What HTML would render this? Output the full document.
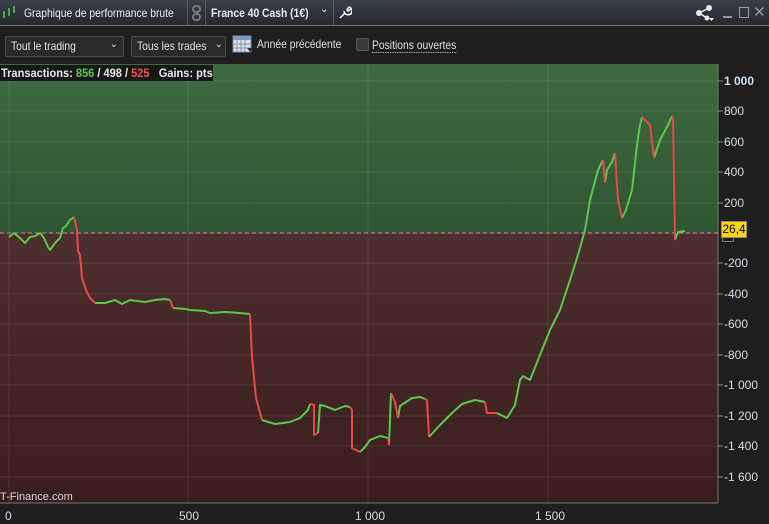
<!DOCTYPE html>
<html><head><meta charset="utf-8"><style>
body{margin:0;width:769px;height:524px;background:#1e1e1e;overflow:hidden;font-family:"Liberation Sans",sans-serif;position:relative}
.title{position:absolute;left:0;top:0;width:769px;height:25px;background:linear-gradient(#3a4048,#262a30);border-bottom:1px solid #6a6e74;color:#e6eaf0;font-size:12px}
.title span{position:absolute;top:6px}
.n{display:inline-block;transform:scaleX(.86);transform-origin:left;white-space:nowrap}
.sep{position:absolute;top:0;width:1px;height:25px;background:#555a60}
.tb{position:absolute;top:36px;height:19px;border:1px solid #4a4a4a;background:#2a2a2a;border-radius:2px;color:#e0e0e0;font-size:12px;line-height:19px;padding-left:5px;box-sizing:content-box}
.ax{position:absolute;color:#d0dcea;font-size:12px}
</style></head><body>
<div class="title">
<svg style="position:absolute;left:2px;top:5px" width="14" height="14"><g stroke="#5c5" stroke-width="1.5"><line x1="2" y1="6" x2="2" y2="13"/><line x1="7" y1="3" x2="7" y2="11"/><line x1="12" y1="1" x2="12" y2="8"/></g></svg>
<span style="left:24px" class="n">Graphique de performance brute</span>
<div class="sep" style="left:187px"></div>
<svg style="position:absolute;left:191px;top:5px" width="12" height="16"><rect x="2" y="1" width="7" height="6" rx="3" fill="none" stroke="#777" stroke-width="2"/><rect x="2" y="9" width="7" height="6" rx="3" fill="none" stroke="#777" stroke-width="2"/></svg>
<div class="sep" style="left:205px"></div>
<span style="left:211px;font-weight:bold" class="n">France 40 Cash (1€)</span>
<span style="left:320px;font-size:10px;top:4px">⌄</span>
<div class="sep" style="left:333px"></div>
<svg style="position:absolute;left:338px;top:5px" width="14" height="14"><path d="M2 13 L7 8 M6 6 A4 4 0 1 0 11 2 L9 5 L10 6 L13 4" stroke="#fff" stroke-width="1.5" fill="none"/></svg>
<svg style="position:absolute;left:695px;top:4px" width="20" height="17"><g fill="#eee" stroke="#eee"><line x1="4" y1="9" x2="14" y2="4" stroke-width="1.5"/><line x1="4" y1="9" x2="12" y2="14" stroke-width="1.5"/><circle cx="4" cy="9" r="2.5"/><circle cx="14" cy="4" r="2.5"/><circle cx="12" cy="14" r="2"/></g><path d="M14 14 h5 l-2.5 3z" fill="#eee"/></svg>
<div style="position:absolute;left:723px;top:16px;width:9px;height:2px;background:#999"></div>
<div style="position:absolute;left:739px;top:7px;width:8px;height:9px;border:1.5px solid #999"></div>
<span style="left:753px;top:3px;color:#999;font-size:15px">✕</span>
</div>
<div class="tb" style="left:5px;width:112px"><span class="n">Tout le trading</span><span style="position:absolute;right:5px;top:-2px;font-size:10px">⌄</span></div>
<div class="tb" style="left:131px;width:88px"><span class="n">Tous les trades</span><span style="position:absolute;right:2px;top:-2px;font-size:10px">⌄</span></div>
<svg style="position:absolute;left:232px;top:33px" width="21" height="20"><rect x="1" y="3" width="18" height="16" fill="#dde4ee" stroke="#7a8aa0"/><rect x="1" y="3" width="18" height="4" fill="#7a9ac0"/><g stroke="#8898b0" stroke-width="1"><line x1="5" y1="7" x2="5" y2="19"/><line x1="9" y1="7" x2="9" y2="19"/><line x1="13" y1="7" x2="13" y2="19"/><line x1="1" y1="11" x2="19" y2="11"/><line x1="1" y1="15" x2="19" y2="15"/></g><path d="M15 15h6l-3 4z" fill="#333"/></svg>
<div style="position:absolute;left:257px;top:37px;color:#e0e0e0;font-size:12px" class="n">Année précédente</div>
<div style="position:absolute;left:356px;top:38px;width:11px;height:11px;background:#3a3a3a;border:1px solid #555;border-radius:2px"></div>
<div style="position:absolute;left:372px;top:39px;color:#e0e0e0;font-size:12px;line-height:12px" class="n"><span style="border-bottom:1px dotted #ccc">Positions ouvertes</span></div>
<svg style="position:absolute;left:0;top:0" width="769" height="524">
<defs><linearGradient id="g" x1="0" y1="0" x2="0" y2="1"><stop offset="0" stop-color="#3f6b41"/><stop offset="1" stop-color="#2f5533"/></linearGradient>
<linearGradient id="r" x1="0" y1="0" x2="0" y2="1"><stop offset="0" stop-color="#4d2f2f"/><stop offset="1" stop-color="#3a1d1d"/></linearGradient></defs>
<rect x="0" y="64" width="718" height="169" fill="url(#g)"/>
<rect x="0" y="233" width="718" height="270" fill="url(#r)"/>
<line x1="718" y1="64" x2="718" y2="503" stroke="#777"/>
<line x1="0" y1="503" x2="718" y2="503" stroke="#777"/>
<g stroke="#ffffff" stroke-opacity="0.09">
<line x1="0" y1="81" x2="718" y2="81"/><line x1="0" y1="111" x2="718" y2="111"/><line x1="0" y1="142" x2="718" y2="142"/><line x1="0" y1="172" x2="718" y2="172"/><line x1="0" y1="203" x2="718" y2="203"/><line x1="0" y1="263" x2="718" y2="263"/><line x1="0" y1="294" x2="718" y2="294"/><line x1="0" y1="324" x2="718" y2="324"/><line x1="0" y1="355" x2="718" y2="355"/><line x1="0" y1="385" x2="718" y2="385"/><line x1="0" y1="416" x2="718" y2="416"/><line x1="0" y1="446" x2="718" y2="446"/><line x1="0" y1="477" x2="718" y2="477"/>
<line x1="9" y1="64" x2="9" y2="503"/><line x1="188" y1="64" x2="188" y2="503"/><line x1="368" y1="64" x2="368" y2="503"/><line x1="548" y1="64" x2="548" y2="503"/>
</g>
<g stroke="#888"><line x1="718" y1="81" x2="723" y2="81"/><line x1="718" y1="111" x2="723" y2="111"/><line x1="718" y1="142" x2="723" y2="142"/><line x1="718" y1="172" x2="723" y2="172"/><line x1="718" y1="203" x2="723" y2="203"/><line x1="718" y1="263" x2="723" y2="263"/><line x1="718" y1="294" x2="723" y2="294"/><line x1="718" y1="324" x2="723" y2="324"/><line x1="718" y1="355" x2="723" y2="355"/><line x1="718" y1="385" x2="723" y2="385"/><line x1="718" y1="416" x2="723" y2="416"/><line x1="718" y1="446" x2="723" y2="446"/><line x1="718" y1="477" x2="723" y2="477"/></g>
<line x1="0" y1="233" x2="718" y2="233" stroke="#3040c0" stroke-width="1"/>
<line x1="0" y1="233" x2="718" y2="233" stroke="#e09050" stroke-dasharray="4 3"/>
<g fill="none" stroke-width="2" stroke-linejoin="round">
<g stroke="#5ac84a">
<polyline points="9,237 14,233 20,238 25,243 30,237 35,236 40,233 44,238 48,247 50,250 55,243 60,238 63,228 66,226 70,220 74,217"/>
<polyline points="95,303 105,303 115,300 122,304 130,300 145,302 155,300 165,299 170,300"/>
<polyline points="173,308 185,309 190,310 205,311 210,313 225,312 240,313 250,314"/>
<polyline points="262,420 275,424 290,422 300,418 308,410 310,404"/>
<polyline points="318,433 320,405 325,406 335,410 345,406 350,407"/>
<polyline points="360,452 365,447 370,440 380,436 388,438"/>
<polyline points="389,445 391,393"/>
<polyline points="398,418 400,406 412,398 420,397 425,399"/>
<polyline points="429,437 440,425 452,413 462,404 475,400 485,402"/>
<polyline points="497,413 507,418 515,405 520,380 523,376 530,380 540,355 550,330 560,310 570,280 578,255 585,230 590,200 598,170 603,160"/>
<polyline points="605,183 607,170 612,162 615,153"/>
<polyline points="622,218 626,210 632,190 637,145 640,125 642,117"/>
<polyline points="654,158 660,140 668,125 672,116"/>
<polyline points="675,240 678,232 685,231"/>
</g>
<g stroke="#e84848">
<polyline points="74,217 77,230 78,251 80,255 82,278 86,290 90,298 95,303"/>
<polyline points="170,300 173,308"/>
<polyline points="250,314 252,357 256,398 262,420"/>
<polyline points="310,404 314,405 314,435 318,433"/>
<polyline points="350,407 352,410 352,448 360,452"/>
<polyline points="388,438 389,445"/>
<polyline points="391,393 395,402 398,418"/>
<polyline points="425,399 427,400 429,437"/>
<polyline points="485,402 487,413 497,413"/>
<polyline points="603,160 605,183"/>
<polyline points="615,153 618,200 622,218"/>
<polyline points="642,117 650,125 654,158"/>
<polyline points="672,116 673,120 675,240"/>
</g></g>
<rect x="0" y="65" width="213" height="16" fill="#111" fill-opacity="0.9"/>
</svg>
<div style="position:absolute;left:1px;top:66px;color:#e8e8e8;font-size:12px;font-weight:bold;transform:scaleX(.92);transform-origin:left;white-space:nowrap">Transactions: <span style="color:#5ac84a">856</span> / 498 / <span style="color:#f05050">525</span>&nbsp;&nbsp; Gains: pts</div>
<div style="position:absolute;left:721px;top:221px;width:24px;height:15px;background:#ffd800;border:1px solid #888;color:#000;font-size:12px;line-height:15px;text-align:center">26,4</div>
<div style="position:absolute;left:722px;top:237px;width:10px;height:4px;border:1px solid #777;border-top:none"></div>
<div class="ax" style="left:724px;top:74px;font-weight:bold">1 000</div>
<div class="ax" style="left:724px;top:104px">800</div>
<div class="ax" style="left:724px;top:135px">600</div>
<div class="ax" style="left:724px;top:165px">400</div>
<div class="ax" style="left:724px;top:196px">200</div>
<div class="ax" style="left:724px;top:256px">-200</div>
<div class="ax" style="left:724px;top:287px">-400</div>
<div class="ax" style="left:724px;top:317px">-600</div>
<div class="ax" style="left:724px;top:348px">-800</div>
<div class="ax" style="left:724px;top:378px">-1 000</div>
<div class="ax" style="left:724px;top:409px">-1 200</div>
<div class="ax" style="left:724px;top:439px">-1 400</div>
<div class="ax" style="left:724px;top:470px">-1 600</div>
<div style="position:absolute;left:0;top:491px;color:#d8d8d8;font-size:11px">T-Finance.com</div>
<div class="ax" style="left:5px;top:509px">0</div>
<div class="ax" style="left:179px;top:509px">500</div>
<div class="ax" style="left:355px;top:509px">1 000</div>
<div class="ax" style="left:535px;top:509px">1 500</div>
</body></html>
